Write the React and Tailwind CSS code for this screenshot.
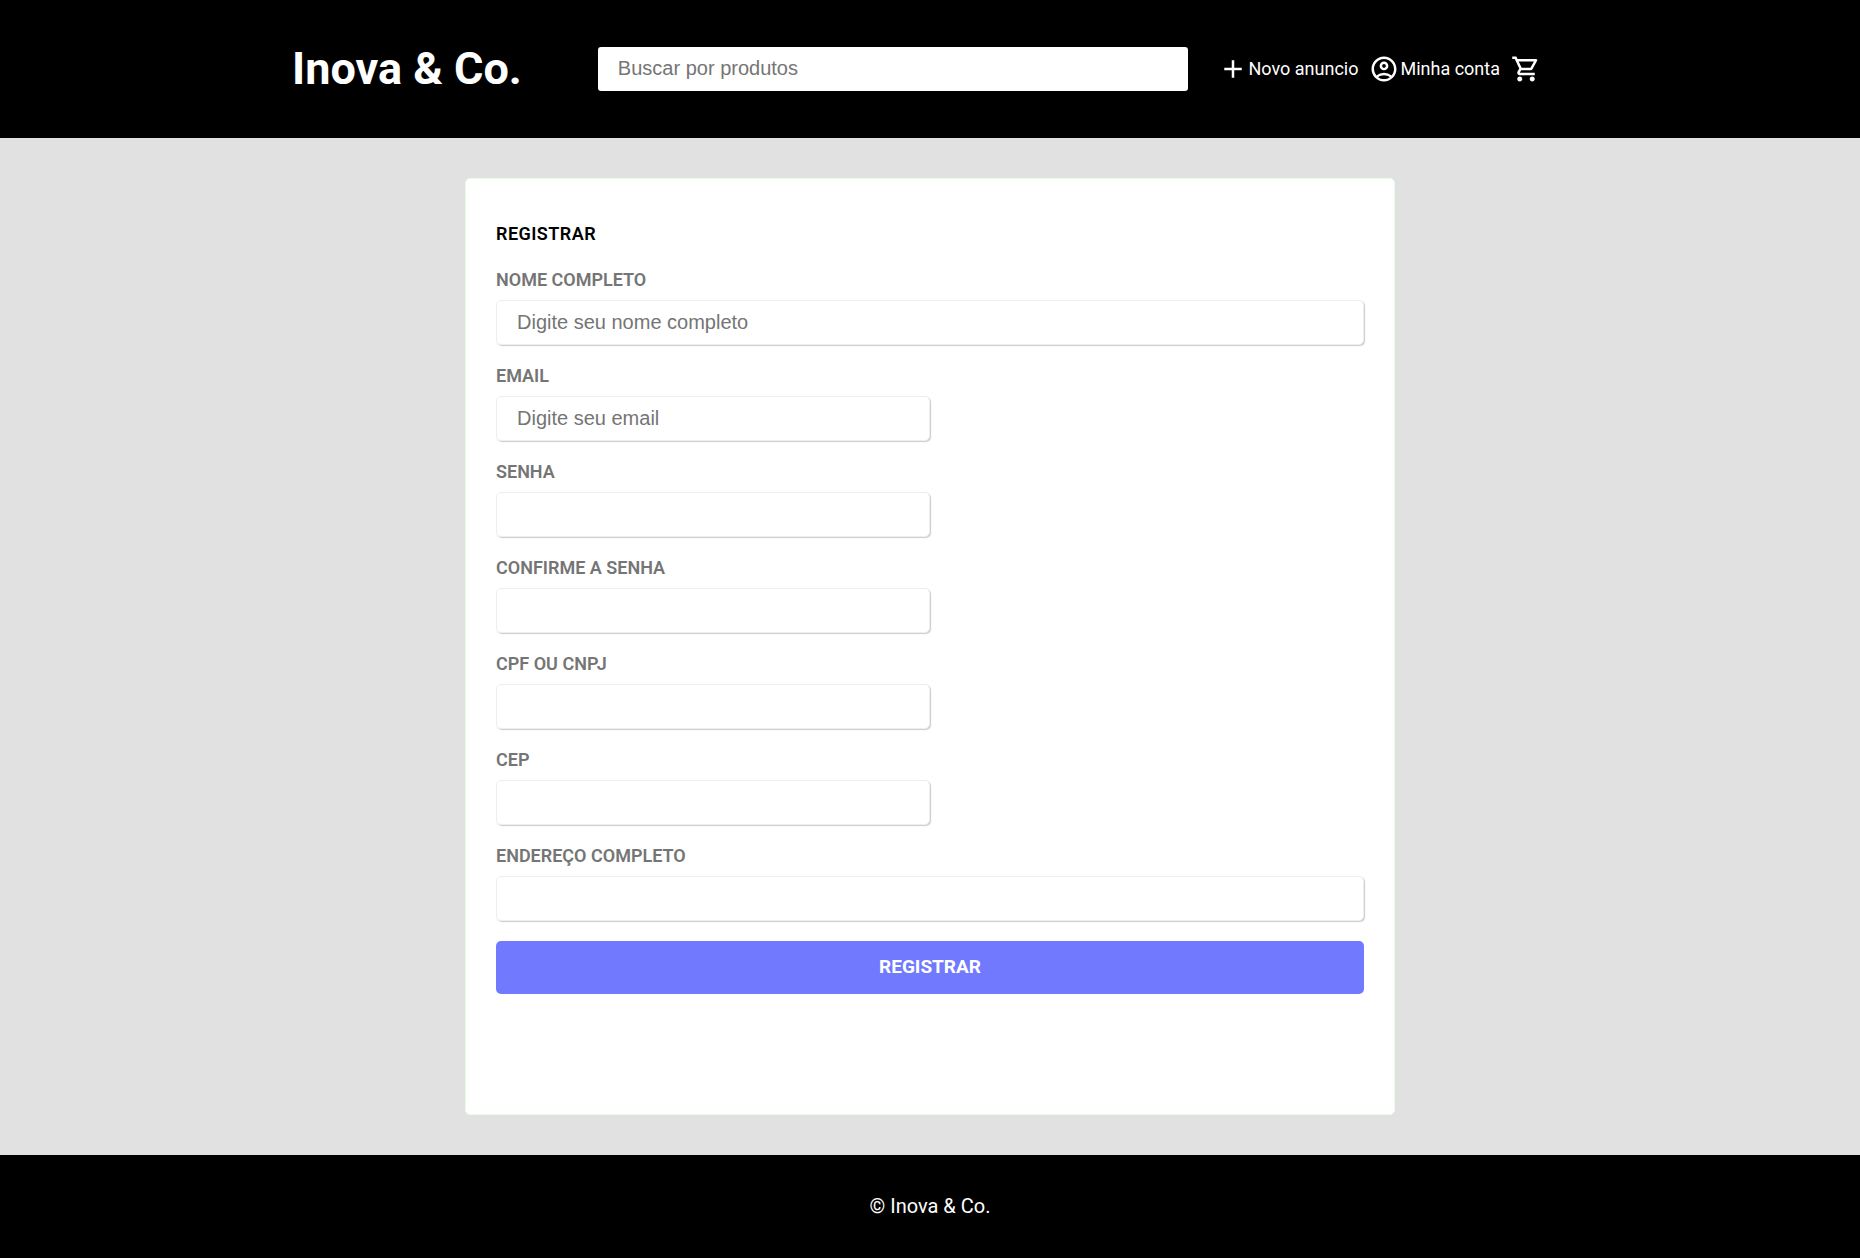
import React from "react";
import { MdAdd, MdOutlineAccountCircle, MdOutlineShoppingCart } from "react-icons/md";

const fields = [
  { id: "nome", label: "NOME COMPLETO", type: "text", placeholder: "Digite seu nome completo", wide: true },
  { id: "email", label: "EMAIL", type: "email", placeholder: "Digite seu email" },
  { id: "senha", label: "SENHA", type: "password" },
  { id: "confirma", label: "CONFIRME A SENHA", type: "password" },
  { id: "documento", label: "CPF OU CNPJ", type: "text" },
  { id: "cep", label: "CEP", type: "text" },
  { id: "endereco", label: "ENDEREÇO COMPLETO", type: "text", wide: true },
];

function Header() {
  return (
    <header className="bg-black px-4 py-[42px] text-white">
      <div className="mx-auto flex max-w-[1276px] items-center pr-[27px]">
        <a href="#" className="shrink-0 text-[45px] leading-[54px] font-bold">
          Inova &amp; Co.
        </a>
        <input
          type="search"
          aria-label="Buscar por produtos"
          placeholder="Buscar por produtos"
          className="mr-[30px] ml-[76px] h-11 min-w-0 flex-1 rounded-[3px] bg-white px-5 pb-[2px] font-['Liberation_Sans',sans-serif] text-xl text-black outline-none placeholder:text-[#757575]"
        />
        <nav className="flex shrink-0 items-center gap-[11px] text-lg">
          <a href="#" className="flex items-center gap-px">
            <MdAdd size={30} />
            Novo anuncio
          </a>
          <a href="#" className="flex items-center gap-px">
            <MdOutlineAccountCircle size={30} />
            Minha conta
          </a>
          <a href="#" aria-label="Carrinho">
            <MdOutlineShoppingCart size={30} />
          </a>
        </nav>
      </div>
    </header>
  );
}

function Field({ id, label, type, placeholder, wide }) {
  return (
    <div className="mb-5 flex flex-col gap-[10px]">
      <label htmlFor={id} className="text-lg leading-[21px] font-semibold text-[#757575]">
        {label}
      </label>
      <input
        id={id}
        type={type}
        placeholder={placeholder}
        className={
          (wide ? "w-full" : "w-1/2") +
          " h-[45px] rounded-[5px] border border-[#eeeeee] bg-white px-5 font-['Liberation_Sans',sans-serif] text-xl text-black shadow-[1px_1px_1px_#cccccc] outline-none placeholder:text-[#757575]"
        }
      />
    </div>
  );
}

export default function App() {
  return (
    <div className="flex min-h-screen flex-col bg-[#e1e1e1] font-[Roboto,sans-serif]">
      <Header />
      <main className="flex flex-1 justify-center py-10">
        <form
          className="w-1/2 rounded-[5px] border border-[#e6fde6] bg-white px-[30px] pt-11 pb-[120px]"
          onSubmit={(e) => e.preventDefault()}
        >
          <h1 className="mb-[25px] text-lg leading-[21px] font-semibold tracking-wide text-black">REGISTRAR</h1>
          {fields.map((f) => (
            <Field key={f.id} {...f} />
          ))}
          <button type="submit" className="h-[53px] w-full rounded-[5px] bg-[#7179ff] text-[19px] font-bold text-white">
            REGISTRAR
          </button>
        </form>
      </main>
      <footer className="bg-black py-10 text-center text-xl leading-[23px] text-white">© Inova &amp; Co.</footer>
    </div>
  );
}
